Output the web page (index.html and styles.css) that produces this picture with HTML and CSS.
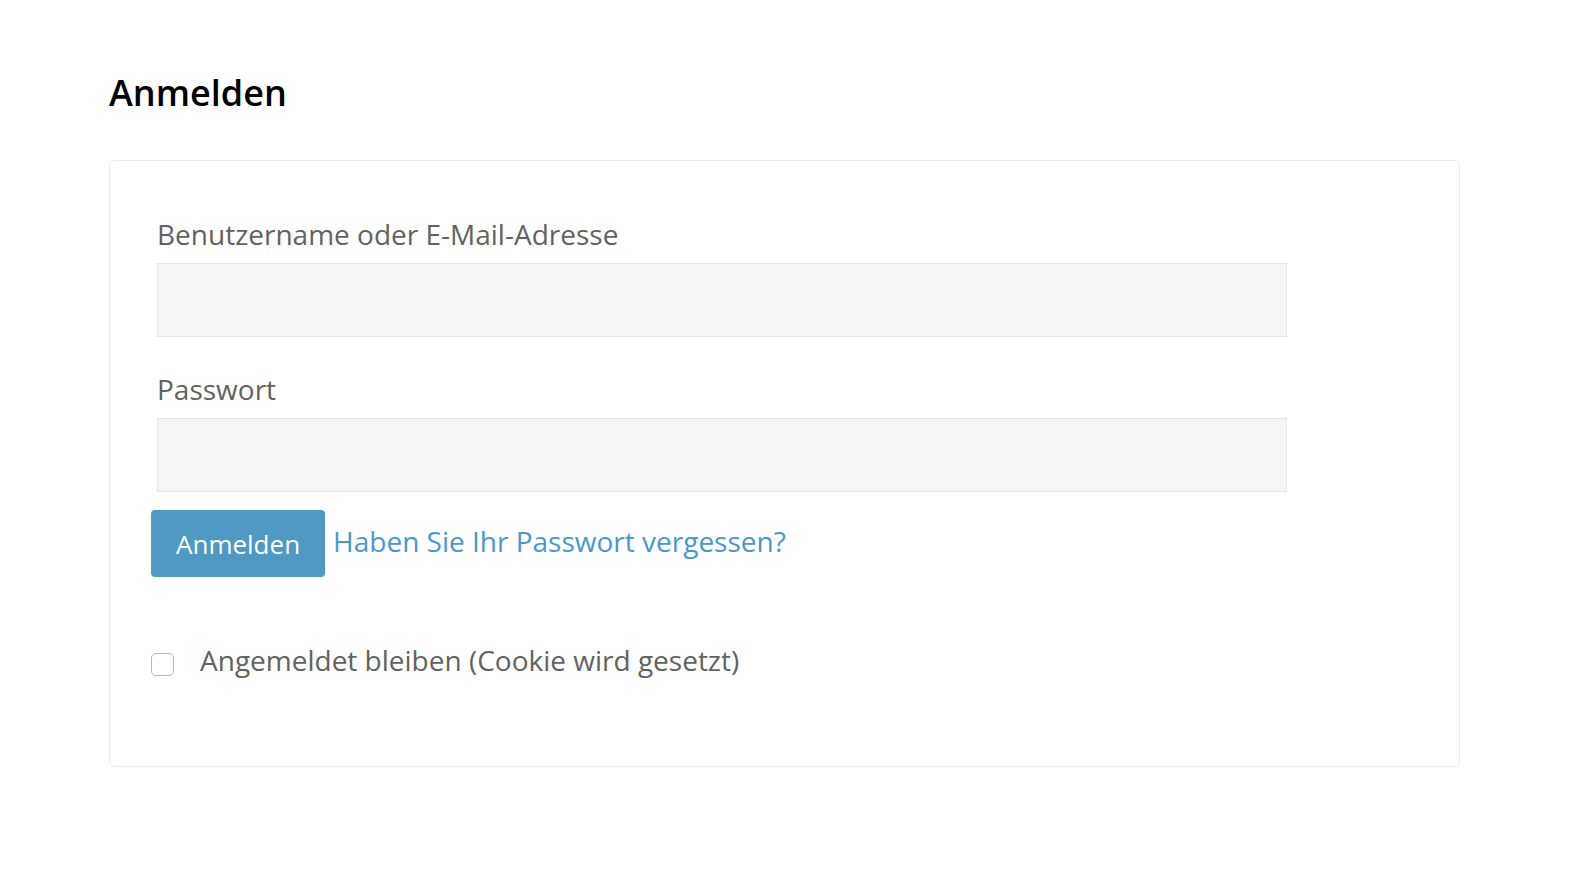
FILE: index.html
```html
<!DOCTYPE html>
<html lang="de">
<head>
    <meta charset="UTF-8">
    <meta name="viewport" content="width=device-width, initial-scale=1.0">
    <title>Anmelden</title>
    <link rel="stylesheet" href="styles.css">
</head>
<body>
    <main class="page">
        <h1 class="page-title">Anmelden</h1>
        <form class="login-card" action="#" method="post">
            <div class="field">
                <label class="field-label" for="user_login">Benutzername oder E-Mail-Adresse</label>
                <input class="field-input" type="text" id="user_login" name="log">
            </div>
            <div class="field">
                <label class="field-label" for="user_pass">Passwort</label>
                <input class="field-input" type="password" id="user_pass" name="pwd">
            </div>
            <div class="actions">
                <button class="btn-submit" type="submit">Anmelden</button>
                <a class="lost-link" href="#">Haben Sie Ihr Passwort vergessen?</a>
            </div>
            <label class="remember">
                <input class="remember-box" type="checkbox" name="rememberme">
                <span>Angemeldet bleiben (Cookie wird gesetzt)</span>
            </label>
        </form>
    </main>
</body>
</html>
```

FILE: styles.css
```css
body {
    margin: 0;
    padding: 0;
    background: #fff;
    font-family: "Open Sans", "Liberation Sans", sans-serif;
    color: #666;
}

.page {
    width: 1351px;
    padding: 71px 0 0 109px;
}

.page-title {
    margin: 0 0 46px;
    font-size: 36px;
    font-weight: 600;
    line-height: 43px;
    color: #000;
}

.login-card {
    border: 1px solid #ebebeb;
    border-radius: 6px;
    padding: 52px 41px 85px;
}

.field {
    margin-left: 6px;
    margin-bottom: 31px;
}

.field:nth-child(2) {
    margin-bottom: 18px;
}

.field-label {
    display: block;
    font-size: 28px;
    line-height: 42px;
    color: #626262;
    margin-bottom: 8px;
}

.field-input {
    display: block;
    box-sizing: border-box;
    width: 1130px;
    height: 74px;
    margin: 0;
    padding: 0 14px;
    background: #f5f5f5;
    border: 1px solid #e6e6e6;
    border-radius: 0;
    font-family: inherit;
    font-size: 24px;
    outline: none;
}

.actions {
    display: flex;
    align-items: center;
    gap: 8px;
}

.btn-submit {
    height: 67px;
    padding: 0 25px;
    background: #4f99c3;
    border: none;
    border-radius: 4px;
    color: #fff;
    font-family: inherit;
    font-size: 26px;
    line-height: 1;
    cursor: pointer;
}

.lost-link {
    margin-bottom: 6px;
    font-size: 28px;
    line-height: 42px;
    color: #4a98c9;
    text-decoration: none;
}

.remember {
    display: flex;
    align-items: center;
    gap: 26px;
    margin-top: 62px;
    font-size: 28px;
    line-height: 42px;
    color: #626262;
}

.remember-box {
    appearance: none;
    -webkit-appearance: none;
    box-sizing: border-box;
    width: 23px;
    height: 23px;
    margin: 8px 0 0;
    border: 1px solid #b5b5b5;
    border-radius: 5px;
    background: #fff;
}
```
